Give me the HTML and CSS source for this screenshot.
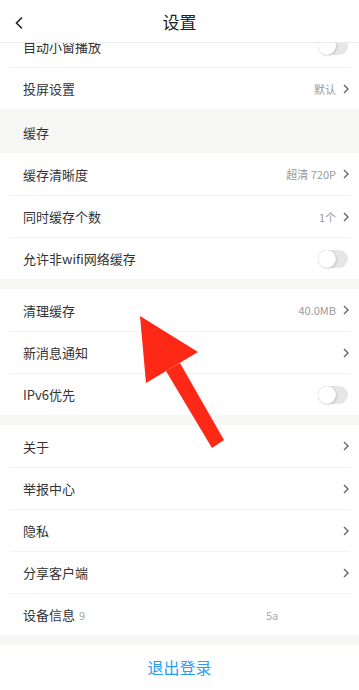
FILE: index.html
```html
<!DOCTYPE html>
<html lang="zh-CN">
<head>
    <meta charset="UTF-8">
    <meta name="viewport" content="width=device-width, initial-scale=1.0">
    <title>设置</title>
    <link rel="stylesheet" href="styles.css">
</head>
<body>
    <div class="header">
        <svg class="back" width="10" height="14" viewBox="0 0 10 14">
            <path d="M8 1.5 L2.5 7 L8 12.5" fill="none" stroke="#222" stroke-width="1.6"/>
        </svg>
        <span class="title">设置</span>
    </div>

    <div class="content">
        <div class="group">
            <div class="row first">
                <span class="label">自动小窗播放</span>
                <span class="switch"></span>
            </div>
            <div class="row">
                <span class="label">投屏设置</span>
                <span class="value">默认</span>
                <svg class="arrow" width="6" height="10" viewBox="0 0 6 10"><path d="M1 1 L5 5 L1 9" fill="none" stroke="#666" stroke-width="1.4"/></svg>
            </div>
        </div>

        <div class="section-title">缓存</div>
        <div class="group">
            <div class="row">
                <span class="label">缓存清晰度</span>
                <span class="value">超清 720P</span>
                <svg class="arrow" width="6" height="10" viewBox="0 0 6 10"><path d="M1 1 L5 5 L1 9" fill="none" stroke="#666" stroke-width="1.4"/></svg>
            </div>
            <div class="row">
                <span class="label">同时缓存个数</span>
                <span class="value">1个</span>
                <svg class="arrow" width="6" height="10" viewBox="0 0 6 10"><path d="M1 1 L5 5 L1 9" fill="none" stroke="#666" stroke-width="1.4"/></svg>
            </div>
            <div class="row">
                <span class="label">允许非wifi网络缓存</span>
                <span class="switch"></span>
            </div>
        </div>

        <div class="group spaced">
            <div class="row">
                <span class="label">清理缓存</span>
                <span class="value">40.0MB</span>
                <svg class="arrow" width="6" height="10" viewBox="0 0 6 10"><path d="M1 1 L5 5 L1 9" fill="none" stroke="#666" stroke-width="1.4"/></svg>
            </div>
            <div class="row">
                <span class="label">新消息通知</span>
                <svg class="arrow" width="6" height="10" viewBox="0 0 6 10"><path d="M1 1 L5 5 L1 9" fill="none" stroke="#666" stroke-width="1.4"/></svg>
            </div>
            <div class="row">
                <span class="label">IPv6优先</span>
                <span class="switch"></span>
            </div>
        </div>

        <div class="group spaced">
            <div class="row">
                <span class="label">关于</span>
                <svg class="arrow" width="6" height="10" viewBox="0 0 6 10"><path d="M1 1 L5 5 L1 9" fill="none" stroke="#666" stroke-width="1.4"/></svg>
            </div>
            <div class="row">
                <span class="label">举报中心</span>
                <svg class="arrow" width="6" height="10" viewBox="0 0 6 10"><path d="M1 1 L5 5 L1 9" fill="none" stroke="#666" stroke-width="1.4"/></svg>
            </div>
            <div class="row">
                <span class="label">隐私</span>
                <svg class="arrow" width="6" height="10" viewBox="0 0 6 10"><path d="M1 1 L5 5 L1 9" fill="none" stroke="#666" stroke-width="1.4"/></svg>
            </div>
            <div class="row">
                <span class="label">分享客户端</span>
                <svg class="arrow" width="6" height="10" viewBox="0 0 6 10"><path d="M1 1 L5 5 L1 9" fill="none" stroke="#666" stroke-width="1.4"/></svg>
            </div>
            <div class="row info">
                <span class="label">设备信息</span>
                <span class="id-start">9</span>
                <span class="id-end">5a</span>
            </div>
        </div>

        <div class="logout">退出登录</div>
    </div>

    <svg class="pointer" width="359" height="690" viewBox="0 0 359 690">
        <polygon points="140,316 198,352 146,383" fill="#fe2816"/>
        <polygon points="166,371 180,363 224,440 212,448" fill="#fe2816"/>
    </svg>
</body>
</html>
```

FILE: styles.css
```css
body {
    margin: 0;
    padding: 0;
    width: 359px;
    height: 690px;
    overflow: hidden;
    background-color: #fff;
    font-family: "Noto Sans CJK SC", "Noto Sans", sans-serif;
    color: #333;
    position: relative;
}

.header {
    height: 42px;
    border-bottom: 1px solid #ececec;
    display: flex;
    align-items: center;
    justify-content: center;
    position: relative;
    background-color: #fff;
}

.header .back {
    position: absolute;
    left: 14px;
    top: 16px;
}

.header .title {
    font-size: 17px;
    color: #222;
}

.content {
    height: 647px;
    overflow: hidden;
    background-color: #f7f7f6;
}

.group {
    background-color: #fff;
}

.group.spaced {
    margin-top: 10px;
}

.row {
    height: 42px;
    margin: 0 9px 0 10px;
    padding: 0 0 0 13px;
    display: flex;
    align-items: center;
    border-top: 1px solid #f2f2f2;
    box-sizing: border-box;
}

.row:first-child {
    border-top: none;
}

.row.first {
    margin-top: -18px;
}

.label {
    font-size: 13px;
    flex: 1;
    white-space: nowrap;
}

.value {
    font-size: 11px;
    color: #9a9a9a;
    margin-right: 7px;
}

.arrow {
    display: block;
    margin-right: 1px;
}

.switch {
    width: 30px;
    height: 18px;
    border-radius: 9px;
    background-color: #e6e6e6;
    position: relative;
    margin-right: 2px;
}

.switch::after {
    content: "";
    position: absolute;
    left: 0;
    top: 0;
    width: 18px;
    height: 18px;
    border-radius: 50%;
    background-color: #fff;
    box-shadow: 0 0 1px rgba(0, 0, 0, 0.25), 1px 1px 2px rgba(0, 0, 0, 0.12);
}

.section-title {
    height: 44px;
    padding-left: 23px;
    font-size: 13px;
    display: flex;
    align-items: center;
    padding-top: 2px;
    box-sizing: border-box;
}

.row.info .label {
    flex: none;
    margin-right: 4px;
}

.id-start,
.id-end {
    font-size: 11px;
    color: #aaa;
}

.id-start {
    display: inline-block;
    width: 7px;
    overflow: hidden;
}

.id-end {
    margin-left: 180px;
}

.logout {
    margin-top: 10px;
    height: 50px;
    background-color: #fff;
    color: #2a9df4;
    font-size: 16px;
    text-align: center;
    line-height: 44px;
}

.pointer {
    position: absolute;
    left: 0;
    top: 0;
}
```
